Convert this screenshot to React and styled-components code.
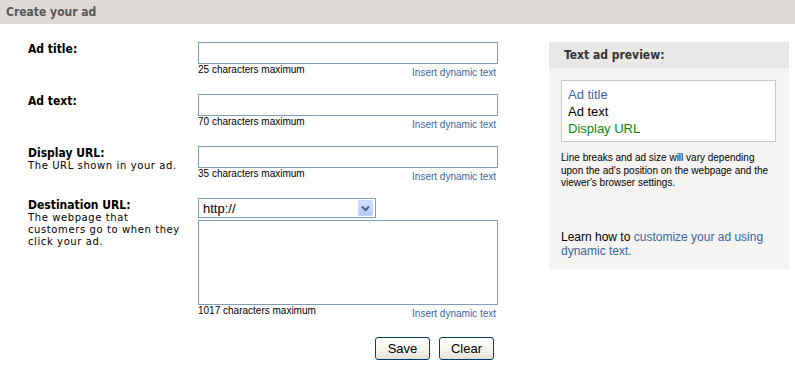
import styled, { createGlobalStyle } from "styled-components";

const GlobalStyle = createGlobalStyle`
  body {
    margin: 0;
    background: #fff;
    font-family: "Liberation Sans", Arial, sans-serif;
  }
`

const Page = styled.div`
  width: 795px;
`
const TitleBar = styled.div`
  height: 24px;
  background: #dddad5;
  padding-left: 6px;
  display: flex;
  align-items: center;
  font-family: "DejaVu Sans", sans-serif;
  font-stretch: condensed;
  font-weight: bold;
  font-size: 12px;
  color: #555;
`
const Content = styled.div`
  display: flex;
  align-items: flex-start;
  padding: 18px 0 0 28px;
`
const Form = styled.div`
  width: 470px;
`
const Row = styled.div`
  display: flex;
  margin-bottom: ${(p) => p.$gap ?? 14}px;
`
const LabelCol = styled.div`
  width: 170px;
  flex-shrink: 0;
`
const Label = styled.div`
  font-family: "DejaVu Sans", sans-serif;
  font-stretch: condensed;
  font-weight: bold;
  font-size: 12px;
  line-height: 14px;
  color: #000;
`
const Help = styled.div`
  font-family: "DejaVu Sans", sans-serif;
  font-size: 10px;
  line-height: 12px;
  letter-spacing: 0.6px;
  color: #000;
  width: 160px;
`
const FieldCol = styled.div`
  width: 300px;
  display: flex;
  flex-direction: column;
`
const TextInput = styled.input`
  box-sizing: border-box;
  width: 300px;
  height: 22px;
  margin: 0;
  border: 1px solid #7f9db9;
  padding: 0 3px;
  background: #fff;
`
const TextArea = styled.textarea`
  box-sizing: border-box;
  width: 300px;
  height: 85px;
  margin: 2px 0 0;
  border: 1px solid #7f9db9;
  resize: none;
  background: #fff;
`
const SelectBox = styled.div`
  box-sizing: border-box;
  width: 178px;
  height: 20px;
  border: 1px solid #7f9db9;
  display: flex;
  align-items: center;
  justify-content: space-between;
  padding: 1px 1px 1px 4px;
  font-size: 13px;
  color: #000;
  background: #fff;
`
const ArrowButton = styled.div`
  width: 15px;
  height: 16px;
  margin-right: 1px;
  border-radius: 1px;
  background: linear-gradient(#d2defc, #b6cbf7);
  border: 1px solid #c3d3fd;
  box-sizing: border-box;
  display: flex;
  align-items: center;
  justify-content: center;
`
const HintRow = styled.div`
  display: flex;
  justify-content: space-between;
  height: 16px;
  padding-right: 2px;
`
const Hint = styled.span`
  font-size: 10px;
  line-height: 12px;
  color: #000;
`
const DynLink = styled.a`
  font-size: 10px;
  line-height: 12px;
  padding-top: 3px;
  color: #3a66a8;
  text-decoration: none;
`
const Buttons = styled.div`
  display: flex;
  justify-content: flex-end;
  gap: 9px;
  margin-top: 16px;
  padding-right: 4px;
`
const Button = styled.button`
  box-sizing: border-box;
  width: 55px;
  height: 23px;
  border: 1px solid #003c74;
  border-radius: 3px;
  background: linear-gradient(#ffffff, #f3f2ec 60%, #e2ded2);
  font-family: "Liberation Sans", Arial, sans-serif;
  font-size: 13px;
  color: #000;
  padding: 0;
`
const Panel = styled.div`
  width: 240px;
  margin-left: 51px;
  background: #f5f4f2;
`
const PanelHead = styled.div`
  height: 26px;
  background: #e8e8e7;
  display: flex;
  align-items: center;
  padding-left: 15px;
  font-family: "DejaVu Sans", sans-serif;
  font-stretch: condensed;
  font-weight: bold;
  font-size: 12px;
  color: #333;
`
const PanelBody = styled.div`
  padding: 12px 13px 10px 12px;
`
const Preview = styled.div`
  box-sizing: border-box;
  height: 62px;
  border: 1px solid #c8c8c8;
  background: #fff;
  padding: 5px 6px 0;
  font-size: 13px;
  line-height: 17px;
`
const PreviewLine = styled.div`
  color: ${(p) => p.$color};
`
const Note = styled.div`
  margin-top: 10px;
  font-size: 10px;
  line-height: 12.5px;
  color: #000;
`
const Learn = styled.div`
  margin-top: 40px;
  font-size: 12px;
  line-height: 14.5px;
  color: #000;
`
const LearnLink = styled.a`
  color: #3a66a8;
  text-decoration: none;
`

const Field = ({ hint, children }) => (
  <FieldCol>
    {children}
    <HintRow>
      <Hint>{hint}</Hint>
      <DynLink href="#">Insert dynamic text</DynLink>
    </HintRow>
  </FieldCol>
)

const App = () => {
  return (
    <Page>
      <GlobalStyle />
      <TitleBar>Create your ad</TitleBar>
      <Content>
        <Form>
          <Row>
            <LabelCol><Label>Ad title:</Label></LabelCol>
            <Field hint="25 characters maximum"><TextInput /></Field>
          </Row>
          <Row>
            <LabelCol><Label>Ad text:</Label></LabelCol>
            <Field hint="70 characters maximum"><TextInput /></Field>
          </Row>
          <Row>
            <LabelCol>
              <Label>Display URL:</Label>
              <Help>The URL shown in your ad.</Help>
            </LabelCol>
            <Field hint="35 characters maximum"><TextInput /></Field>
          </Row>
          <Row $gap={0}>
            <LabelCol>
              <Label>Destination URL:</Label>
              <Help>The webpage that customers go to when they click your ad.</Help>
            </LabelCol>
            <FieldCol>
              <SelectBox>
                <span>http://</span>
                <ArrowButton>
                  <svg width="9" height="7" viewBox="0 0 9 7">
                    <path d="M1 1.5 L4.5 5 L8 1.5" fill="none" stroke="#4d6185" strokeWidth="2" />
                  </svg>
                </ArrowButton>
              </SelectBox>
              <TextArea />
              <HintRow>
                <Hint>1017 characters maximum</Hint>
                <DynLink href="#">Insert dynamic text</DynLink>
              </HintRow>
              <Buttons>
                <Button>Save</Button>
                <Button>Clear</Button>
              </Buttons>
            </FieldCol>
          </Row>
        </Form>
        <Panel>
          <PanelHead>Text ad preview:</PanelHead>
          <PanelBody>
            <Preview>
              <PreviewLine $color="#3a66a8">Ad title</PreviewLine>
              <PreviewLine $color="#000">Ad text</PreviewLine>
              <PreviewLine $color="#0a8a0a">Display URL</PreviewLine>
            </Preview>
            <Note>
              Line breaks and ad size will vary depending upon the ad's position on the webpage and the viewer's browser settings.
            </Note>
            <Learn>
              Learn how to <LearnLink href="#">customize your ad using dynamic text.</LearnLink>
            </Learn>
          </PanelBody>
        </Panel>
      </Content>
    </Page>
  )
}

export default App
